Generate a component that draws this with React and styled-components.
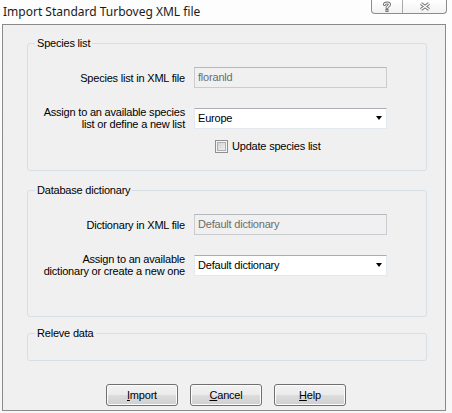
import React from "react";
import styled, { createGlobalStyle } from "styled-components";

const Global = createGlobalStyle`
  html, body { margin: 0; padding: 0; background: #fbfbfb; }
  body { font-family: "Liberation Sans", Arial, sans-serif; }
`;

const Window = styled.div`
  width: 452px;
  height: 413px;
  display: flex;
  flex-direction: column;
  background: linear-gradient(#fdfdfd, #f6f6f6);
`;

const TitleBar = styled.div`
  height: 24px;
  display: flex;
  justify-content: space-between;
  align-items: flex-start;
`;

const Title = styled.div`
  padding-left: 3px;
  line-height: 24px;
  font-family: "Noto Sans", sans-serif;
  font-size: 12px;
  color: #1a1a1a;
`;

const Caption = styled.div`
  display: flex;
  margin-right: 5px;
  height: 13px;
  border: 1px solid #8c8c8c;
  border-top: none;
  border-radius: 0 0 4px 4px;
  background: linear-gradient(#ffffff, #f2f2f2);
  overflow: hidden;
`;

const CapButton = styled.div`
  width: ${(p) => p.$w}px;
  display: flex;
  align-items: center;
  justify-content: center;
  border-left: ${(p) => (p.$divider ? "1px solid #a8a8a8" : "none")};
`;

const Panel = styled.div`
  box-sizing: border-box;
  width: 444px;
  height: 387px;
  margin-left: 2px;
  border: 1px solid #8a8a8a;
  background: #f0f0f0;
  padding: 18px 18px 0 24px;
  display: flex;
  flex-direction: column;
  font-size: 11px;
  letter-spacing: -0.2px;
  color: #000;
`;

const Group = styled.div`
  position: relative;
  box-sizing: border-box;
  height: ${(p) => p.$h}px;
  margin-top: ${(p) => p.$mt || 0}px;
  border: 1px solid #d5dfe5;
  border-radius: 3px;
  padding-top: 23px;
  display: flex;
  flex-direction: column;
`;

const Legend = styled.span`
  position: absolute;
  left: 7px;
  top: -7px;
  padding: 0 2px;
  line-height: 13px;
  background: #f0f0f0;
`;

const FieldRow = styled.div`
  display: grid;
  grid-template-columns: 157px 193px;
  column-gap: 9px;
  align-items: center;
  margin-top: ${(p) => p.$mt || 0}px;
`;

const Label = styled.div`
  text-align: right;
  line-height: 12px;
`;

const ReadOnlyInput = styled.div`
  box-sizing: border-box;
  height: 21px;
  border: 1px solid #c9cdd2;
  border-top-color: #b5b9bd;
  background: #f0f0f0;
  color: #6d6d6d;
  padding-left: 3px;
  line-height: 19px;
`;

const Combo = styled.div`
  box-sizing: border-box;
  height: 21px;
  border: 1px solid #e3e9ef;
  border-top-color: #abadb3;
  background: #fff;
  padding-left: 3px;
  display: flex;
  align-items: center;
  justify-content: space-between;
`;

const Arrow = styled.span`
  width: 0;
  height: 0;
  margin-right: 4px;
  border-left: 3.5px solid transparent;
  border-right: 3.5px solid transparent;
  border-top: 4px solid #000;
`;

const CheckRow = styled.label`
  grid-column: 2;
  display: flex;
  align-items: center;
  gap: 4px;
  padding-left: 21px;
  line-height: 13px;
`;

const CheckBox = styled.span`
  box-sizing: border-box;
  width: 13px;
  height: 13px;
  border: 1px solid #8e8f8f;
  background: #f4f4f4;
  box-shadow: inset 0 0 0 1px #f4f4f4, inset 0 0 0 2px #aeb0b2;
  background-image: linear-gradient(135deg, #cbcbcb, #f7f7f7);
`;

const ButtonRow = styled.div`
  display: flex;
  gap: 12px;
  margin-top: 23px;
  padding-left: 79px;
`;

const Button = styled.button`
  box-sizing: border-box;
  width: 72px;
  height: 22px;
  border: 1px solid #707070;
  border-radius: 3px;
  background: linear-gradient(#f2f2f2 0%, #ebebeb 50%, #dddddd 50%, #cfcfcf 100%);
  box-shadow: inset 0 0 0 1px #fcfcfc;
  font-family: "Liberation Sans", Arial, sans-serif;
  font-size: 11px;
  letter-spacing: -0.2px;
  color: #000;
  padding: 0;
`;

const Key = styled.span`
  text-decoration: underline;
`;

function HelpIcon() {
  return (
    <svg width="10" height="11" viewBox="0 0 10 11">
      <path d="M2.5 3.5 C2.5 1.5 7.5 1.5 7.5 3.5 C7.5 5 5 5 5 6.8" fill="none" stroke="#6e6e6e" strokeWidth="3" strokeLinecap="round" />
      <path d="M2.5 3.5 C2.5 1.5 7.5 1.5 7.5 3.5 C7.5 5 5 5 5 6.8" fill="none" stroke="#ffffff" strokeWidth="1.2" strokeLinecap="round" />
      <rect x="3.5" y="8" width="3" height="3" fill="#6e6e6e" />
      <rect x="4.5" y="9" width="1" height="1" fill="#ffffff" />
    </svg>
  );
}

function CloseIcon() {
  return (
    <svg width="12" height="9" viewBox="0 0 12 9">
      <path d="M2 1.5 L10 7.5 M10 1.5 L2 7.5" fill="none" stroke="#6e6e6e" strokeWidth="3.2" />
      <path d="M2 1.5 L10 7.5 M10 1.5 L2 7.5" fill="none" stroke="#ffffff" strokeWidth="1.3" />
    </svg>
  );
}

export default function App() {
  return (
    <>
      <Global />
      <Window>
        <TitleBar>
          <Title>Import Standard Turboveg XML file</Title>
          <Caption>
            <CapButton $w={30}><HelpIcon /></CapButton>
            <CapButton $w={43} $divider><CloseIcon /></CapButton>
          </Caption>
        </TitleBar>
        <Panel>
          <Group $h={128}>
            <Legend>Species list</Legend>
            <FieldRow>
              <Label>Species list in XML file</Label>
              <ReadOnlyInput>floranld</ReadOnlyInput>
            </FieldRow>
            <FieldRow $mt={18}>
              <Label>Assign to an available species<br />list or define a new list</Label>
              <Combo>Europe<Arrow /></Combo>
            </FieldRow>
            <FieldRow $mt={10}>
              <CheckRow><CheckBox />Update species list</CheckRow>
            </FieldRow>
          </Group>
          <Group $h={127} $mt={19}>
            <Legend>Database dictionary</Legend>
            <FieldRow>
              <Label>Dictionary in XML file</Label>
              <ReadOnlyInput>Default dictionary</ReadOnlyInput>
            </FieldRow>
            <FieldRow $mt={18}>
              <Label>Assign to an available<br />dictionary or create a new one</Label>
              <Combo>Default dictionary<Arrow /></Combo>
            </FieldRow>
          </Group>
          <Group $h={28} $mt={16}>
            <Legend>Releve data</Legend>
          </Group>
          <ButtonRow>
            <Button><Key>I</Key>mport</Button>
            <Button><Key>C</Key>ancel</Button>
            <Button><Key>H</Key>elp</Button>
          </ButtonRow>
        </Panel>
      </Window>
    </>
  );
}
